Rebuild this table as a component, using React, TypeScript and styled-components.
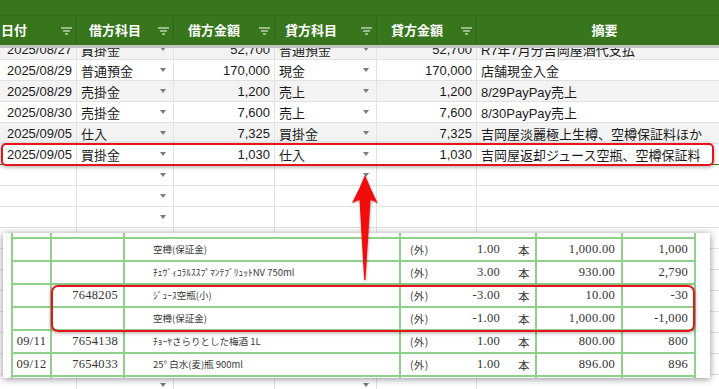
import React from 'react';
import styled, {createGlobalStyle} from 'styled-components';

const GREEN = '#38761d';
const COLS = '77px 97px 101px 102px 100px 260px';
const INVOICE_COLS = '41px 73px 276px 136px 86px 73px';

const GlobalStyle = createGlobalStyle`
  html, body {
    margin: 0;
    padding: 0;
    background: #fff;
    overflow: hidden;
  }
  body {
    font-family: 'Liberation Sans', 'Noto Sans CJK JP', sans-serif;
  }
`;

type Entry = {
  date: string;
  debit: string;
  debitAmount: string;
  credit: string;
  creditAmount: string;
  memo: string;
};

const entries: Entry[] = [
  {date: '2025/08/27', debit: '買掛金', debitAmount: '52,700', credit: '普通預金', creditAmount: '52,700', memo: 'R7年7月分吉岡屋酒代支払'},
  {date: '2025/08/29', debit: '普通預金', debitAmount: '170,000', credit: '現金', creditAmount: '170,000', memo: '店舗現金入金'},
  {date: '2025/08/29', debit: '売掛金', debitAmount: '1,200', credit: '売上', creditAmount: '1,200', memo: '8/29PayPay売上'},
  {date: '2025/08/30', debit: '売掛金', debitAmount: '7,600', credit: '売上', creditAmount: '7,600', memo: '8/30PayPay売上'},
  {date: '2025/09/05', debit: '仕入', debitAmount: '7,325', credit: '買掛金', creditAmount: '7,325', memo: '吉岡屋淡麗極上生樽、空樽保証料ほか'},
  {date: '2025/09/05', debit: '買掛金', debitAmount: '1,030', credit: '仕入', creditAmount: '1,030', memo: '吉岡屋返却ジュース空瓶、空樽保証料'},
];

const headers = [
  {label: '日付', pad: 1, filter: true},
  {label: '借方科目', pad: 12, filter: true},
  {label: '借方金額', pad: 14, filter: true},
  {label: '貸方科目', pad: 10, filter: true},
  {label: '貸方金額', pad: 14, filter: true},
  {label: '摘要', pad: 0, filter: false},
];

type InvoiceLine = {
  date?: string;
  code?: string;
  name?: string;
  qty?: string;
  price?: string;
  amount?: string;
};

// scanned invoice rows; the first and last are only partly visible
const invoiceLines: InvoiceLine[] = [
  {},
  {name: '空樽(保証金)', qty: '1.00', price: '1,000.00', amount: '1,000'},
  {name: 'ﾁｪｳﾞｨｺﾗﾙｽｽﾌﾟﾏﾝﾃﾌﾞﾘｭｯﾄNV 750ml', qty: '3.00', price: '930.00', amount: '2,790'},
  {code: '7648205', name: 'ｼﾞｭｰｽ空瓶(小)', qty: '-3.00', price: '10.00', amount: '-30'},
  {name: '空樽(保証金)', qty: '-1.00', price: '1,000.00', amount: '-1,000'},
  {date: '09/11', code: '7654138', name: 'ﾁｮｰﾔさらりとした梅酒 1L', qty: '1.00', price: '800.00', amount: '800'},
  {date: '09/12', code: '7654033', name: '25° 白水(麦)瓶 900ml', qty: '1.00', price: '896.00', amount: '896'},
  {},
];

const EMPTY_ROWS = 11;

const FilterIcon = () => (
  <svg width="11" height="8" viewBox="0 0 11 8">
    <g stroke="#fff" strokeWidth="1.1" opacity="0.9">
      <line x1="0" y1="1" x2="11" y2="1" />
      <line x1="2" y1="4" x2="9" y2="4" />
      <line x1="4" y1="7" x2="7" y2="7" />
    </g>
  </svg>
);

const App = () => {
  return (
    <Sheet>
      <GlobalStyle />
      <TopBand />
      <HeaderRow>
        {headers.map((h) => (
          <HeaderCell key={h.label} $pad={h.pad} $center={!h.filter}>
            <span>{h.label}</span>
            {h.filter && <FilterIcon />}
          </HeaderCell>
        ))}
      </HeaderRow>
      <FreezeLine />

      <Body>
        <Rows>
          {entries.map((e, i) => (
            <Row key={i} $shade={i % 2 === 0} $last={i === entries.length - 1}>
              <Cell $align="right">{e.date}</Cell>
              <SelectCell>
                <span>{e.debit}</span>
                <Caret />
              </SelectCell>
              <Cell $align="right">{e.debitAmount}</Cell>
              <SelectCell>
                <span>{e.credit}</span>
                <Caret />
              </SelectCell>
              <Cell $align="right">{e.creditAmount}</Cell>
              <Cell>{e.memo}</Cell>
            </Row>
          ))}
          {Array.from({length: EMPTY_ROWS}).map((_, i) => (
            <Row key={`empty-${i}`}>
              <Cell />
              <SelectCell>
                <span />
                <Caret />
              </SelectCell>
              <Cell />
              <SelectCell>
                <span />
                <Caret />
              </SelectCell>
              <Cell />
              <Cell />
            </Row>
          ))}
        </Rows>
      </Body>

      <RowMark />

      <Scan>
        <InvoiceTable>
          {invoiceLines.map((l, i) => (
            <InvoiceRow key={i}>
              <DateCell>{l.date}</DateCell>
              <CodeCell>{l.code}</CodeCell>
              <NameCell>{l.name}</NameCell>
              <QtyCell>
                {l.qty && (
                  <>
                    <Tax>(外)</Tax>
                    <Qty>{l.qty}</Qty>
                    <Unit>本</Unit>
                  </>
                )}
              </QtyCell>
              <NumCell>{l.price}</NumCell>
              <NumCell>{l.amount}</NumCell>
            </InvoiceRow>
          ))}
        </InvoiceTable>
        <ScanMark />
      </Scan>

      <Arrow width="40" height="116" viewBox="0 0 40 116">
        <defs>
          <filter id="arrowShadow" x="-40%" y="-10%" width="180%" height="120%">
            <feDropShadow dx="0.5" dy="1" stdDeviation="1" floodColor="#000" floodOpacity="0.35" />
          </filter>
        </defs>
        <path
          d="M20 5 Q14.5 19 7 33 Q11 31 14.5 30 L19.2 110 L20.4 110 L25.5 30 Q29 31 32.5 33 Q25.5 19 20 5 Z"
          fill="#f2080c"
          filter="url(#arrowShadow)"
        />
      </Arrow>
    </Sheet>
  );
};

const Sheet = styled.div`
  position: relative;
  width: 719px;
  height: 389px;
  overflow: hidden;
  background: #fff;
`;

const TopBand = styled.div`
  height: 15px;
  background: ${GREEN};
`;

const HeaderRow = styled.div`
  display: grid;
  grid-template-columns: ${COLS};
  height: 30px;
  box-sizing: border-box;
  border-top: 1px solid #2f6818;
  background: ${GREEN};
`;

const HeaderCell = styled.div<{$pad: number; $center: boolean}>`
  display: flex;
  align-items: center;
  justify-content: ${({$center}) => ($center ? 'center' : 'space-between')};
  padding: 0 4px 0 ${({$pad}) => $pad}px;
  border-right: 1px solid #2f6818;
  color: #fff;
  font-size: 13px;
  font-weight: bold;
  white-space: nowrap;

  span {
    line-height: 1;
  }
`;

const FreezeLine = styled.div`
  height: 3px;
  background: #c4c4c4;
`;

const Body = styled.div`
  height: 341px;
  overflow: hidden;
`;

const Rows = styled.div`
  margin-top: -9px;
`;

const Row = styled.div<{$shade?: boolean; $last?: boolean}>`
  display: grid;
  grid-template-columns: ${COLS};
  height: 21px;
  box-sizing: border-box;
  border-bottom: 1px solid ${({$last}) => ($last ? GREEN : '#e2e2e2')};
  background: ${({$shade}) => ($shade ? '#f3f3f3' : '#fff')};
`;

const Cell = styled.div<{$align?: 'left' | 'right'}>`
  display: flex;
  align-items: center;
  justify-content: ${({$align}) => ($align === 'right' ? 'flex-end' : 'flex-start')};
  padding: 0 4px;
  border-right: 1px solid #e2e2e2;
  font-size: 13px;
  color: #1a1a1a;
  white-space: nowrap;
  overflow: hidden;
`;

const SelectCell = styled(Cell)`
  justify-content: space-between;
  padding-right: 7px;
`;

const Caret = styled.span`
  width: 0;
  height: 0;
  border-left: 3.5px solid transparent;
  border-right: 3.5px solid transparent;
  border-top: 4px solid #7b7b7b;
`;

const RowMark = styled.div`
  position: absolute;
  left: 1px;
  top: 143px;
  width: 713px;
  height: 23px;
  box-sizing: border-box;
  border: 2px solid #e8141c;
  border-radius: 5px;
  box-shadow: 0 1px 4px rgba(0, 0, 0, 0.35);
`;

const Scan = styled.div`
  position: absolute;
  left: 3px;
  top: 233px;
  width: 707px;
  height: 145px;
  overflow: hidden;
  background: #fff;
  box-shadow: 0 1px 7px rgba(0, 0, 0, 0.45);
`;

const InvoiceTable = styled.div`
  margin-top: -17px;
  padding-left: 8px;
  color: #333;
`;

const InvoiceRow = styled.div`
  display: grid;
  grid-template-columns: ${INVOICE_COLS};
  height: 23px;

  & > div {
    box-sizing: border-box;
    border-right: 2px solid #8fd08a;
    border-bottom: 2px solid #8fd08a;
  }

  & > div:first-child {
    border-left: 2px solid #8fd08a;
  }
`;

const InvoiceCell = styled.div`
  display: flex;
  align-items: center;
  font-family: 'Liberation Serif', 'Noto Sans CJK JP', serif;
  font-size: 12.5px;
  letter-spacing: 0.3px;
  white-space: nowrap;
  overflow: hidden;
`;

const DateCell = styled(InvoiceCell)`
  justify-content: center;
`;

const CodeCell = styled(InvoiceCell)`
  justify-content: flex-end;
  padding-right: 5px;
`;

const NameCell = styled(InvoiceCell)`
  align-items: flex-start;
  padding: 3px 0 0 28px;
  font-family: 'Noto Sans CJK JP', sans-serif;
  font-size: 9.5px;
  letter-spacing: 0;
  color: #3a3a3a;
`;

const QtyCell = styled(InvoiceCell)`
  padding-left: 9px;
`;

const Tax = styled.span`
  font-family: 'Noto Sans CJK JP', sans-serif;
  font-size: 10.5px;
  color: #3a3a3a;
`;

const Qty = styled.span`
  flex: 1;
  text-align: right;
`;

const Unit = styled.span`
  width: 12px;
  padding: 0 5px 0 18px;
  font-family: 'Noto Sans CJK JP', sans-serif;
  font-size: 11.5px;
  color: #3a3a3a;
`;

const NumCell = styled(InvoiceCell)`
  justify-content: flex-end;
  padding-right: 6px;
`;

const ScanMark = styled.div`
  position: absolute;
  left: 48px;
  top: 52px;
  width: 644px;
  height: 47px;
  box-sizing: border-box;
  border: 2px solid #e8141c;
  border-radius: 7px;
  box-shadow: 0 1px 4px rgba(0, 0, 0, 0.35);
`;

const Arrow = styled.svg`
  position: absolute;
  left: 345px;
  top: 170px;
`;

export default App;
